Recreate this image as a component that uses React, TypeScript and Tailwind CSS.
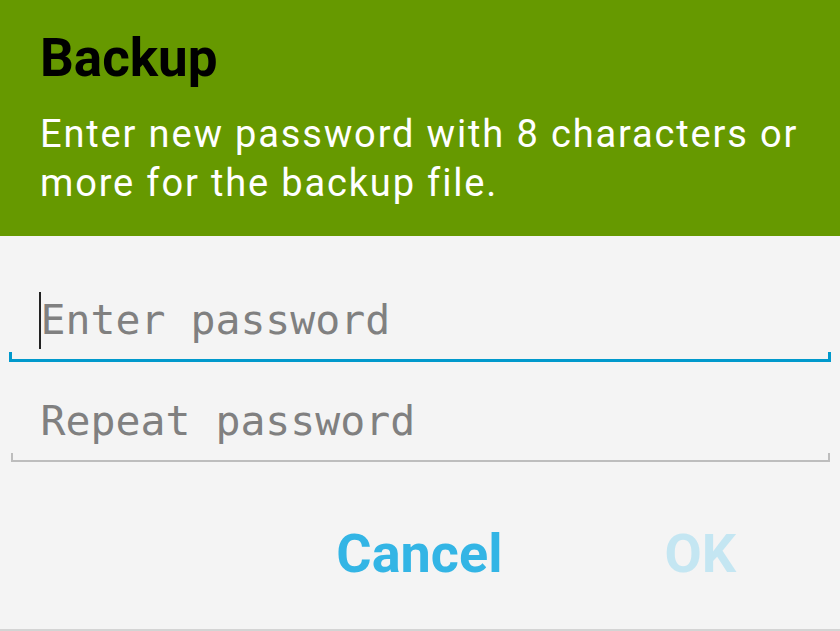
import React from "react";

// Holo-style underline with end ticks
function HoloField({ placeholder, focused }: { placeholder: string; focused?: boolean }) {
  const line = focused ? "bg-[#0099cc]" : "bg-[#bdbdbd]";
  return (
    <div>
      <div className="flex h-[64px] items-center pl-[39px]">
        {focused && <div className="h-[57px] w-[1.5px] shrink-0 bg-[#222]" />}
        <span
          className={`text-[41.5px] leading-none text-[#808080] ${focused ? "" : "pl-[1.5px]"}`}
          style={{ fontFamily: '"DejaVu Sans Mono", "Liberation Mono", monospace' }}
        >
          {placeholder}
        </span>
      </div>
      <div className={`flex items-end ${focused ? "mx-[9px]" : "ml-[11px] mr-[10px]"}`}>
        <div className={`${line} ${focused ? "h-[10px] w-[3px]" : "h-[9px] w-[2px]"}`} />
        <div className={`${line} flex-1 ${focused ? "h-[3px]" : "h-[2px]"}`} />
        <div className={`${line} ${focused ? "h-[10px] w-[3px]" : "h-[9px] w-[2px]"}`} />
      </div>
    </div>
  );
}

export default function App() {
  return (
    <div
      className="flex h-[631px] w-[840px] flex-col bg-[#f4f4f4]"
      style={{ fontFamily: "Roboto, 'Noto Sans', sans-serif" }}
    >
      <div className="h-[236px] bg-[#669900] pl-[40px] pr-[20px] pt-[27px]">
        <h1 className="text-[53px] font-bold leading-[62px] text-black">Backup</h1>
        <p className="mt-[21px] text-[38px] leading-[49px] tracking-[1.85px] text-white">
          Enter new password with 8 characters or more for the backup file.
        </p>
      </div>

      <div className="flex flex-col gap-[27px] pt-[52px]">
        <HoloField placeholder="Enter password" focused />
        <HoloField placeholder="Repeat password" />
      </div>

      <div className="flex flex-1 items-start justify-end pr-[104px] pt-[65px]">
        <button className="text-[54px] font-bold leading-none text-[#33b5e5]">Cancel</button>
        <button className="ml-[162px] text-[54px] font-bold leading-none text-[#c4e6f2]">OK</button>
      </div>
      <div className="h-[2px] bg-[#d4d4d4]" />
    </div>
  );
}
